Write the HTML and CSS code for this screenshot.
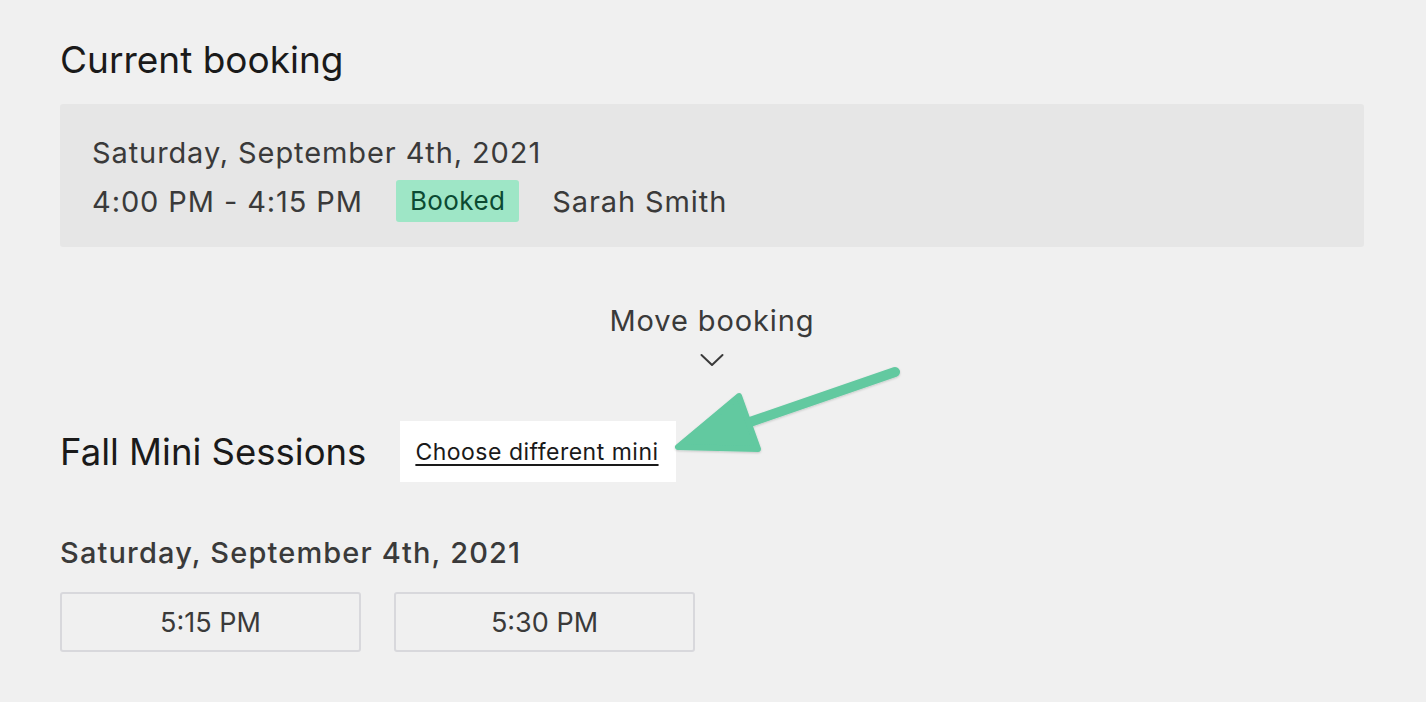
FILE: index.html
```html
<!DOCTYPE html>
<html>
<head>
<meta charset="utf-8">
<link rel="stylesheet" href="styles.css">
</head>
<body>
<div class="page">
  <h1 class="title">Current booking</h1>
  <div class="card">
    <div class="card-date">Saturday, September 4th, 2021</div>
    <div class="card-row">
      <span class="time">4:00 PM - 4:15 PM</span>
      <span class="badge">Booked</span>
      <span class="name">Sarah Smith</span>
    </div>
  </div>
  <div class="move">
    <div class="move-label">Move booking</div>
    <svg class="chevron" width="24" height="14" viewBox="0 0 24 14"><path d="M1.5 2 L12 12 L22.5 2" fill="none" stroke="#3a3a3a" stroke-width="2" stroke-linecap="round" stroke-linejoin="round"/></svg>
  </div>
  <div class="session-row">
    <h2 class="session-title">Fall Mini Sessions</h2>
    <div class="choose-box"><a class="choose" href="#">Choose different mini</a></div>
    <svg class="arrow" width="260" height="110" viewBox="0 0 260 110">
      <defs>
        <filter id="sh" x="-10%" y="-10%" width="120%" height="130%">
          <feDropShadow dx="0" dy="1" stdDeviation="1" flood-color="#000" flood-opacity="0.18"/>
        </filter>
      </defs>
      <g filter="url(#sh)">
        <line x1="235" y1="12" x2="90" y2="62" stroke="#62c9a0" stroke-width="10" stroke-linecap="round"/>
        <path d="M79 36 L18 87 L98 89 Z" fill="#62c9a0" stroke="#62c9a0" stroke-width="6" stroke-linejoin="round"/>
      </g>
    </svg>
  </div>
  <h3 class="day">Saturday, September 4th, 2021</h3>
  <div class="slots">
    <button class="slot">5:15 PM</button>
    <button class="slot">5:30 PM</button>
  </div>
</div>
</body>
</html>
```
FILE: styles.css
```css
html, body {
  margin: 0;
  padding: 0;
  background: #f0f0f0;
  font-family: Inter, "Noto Sans", sans-serif;
  color: #3a3a3a;
}
.page {
  padding: 38px 62px 0 60px;
}
.title {
  margin: 0;
  font-size: 37px;
  font-weight: 400;
  color: #1a1a1a;
  line-height: 44px;
}
.card {
  box-sizing: border-box;
  margin-top: 22px;
  background: #e6e6e6;
  border-radius: 3px;
  padding: 32px 32px 0;
  height: 143px;
}
.card-date {
  font-size: 29px;
  letter-spacing: 0.9px;
  line-height: 34px;
}
.card-row {
  display: flex;
  align-items: center;
  margin-top: 10px;
  height: 42px;
  font-size: 29px;
  letter-spacing: 0.9px;
}
.badge {
  background: #9ee6c6;
  color: #0b4a32;
  font-size: 26px;
  letter-spacing: 0.4px;
  border-radius: 3px;
  padding: 0 14px;
  height: 42px;
  line-height: 42px;
  margin-left: 33px;
  margin-right: 33px;
}
.move {
  display: flex;
  flex-direction: column;
  align-items: center;
  margin-top: 57px;
}
.move-label {
  font-size: 29px;
  letter-spacing: 0.9px;
  line-height: 34px;
}
.chevron {
  display: block;
  margin-top: 15px;
}
.session-row {
  position: relative;
  display: flex;
  align-items: center;
  margin-top: 54px;
  height: 61px;
}
.session-title {
  margin: 0;
  font-size: 36.5px;
  font-weight: 400;
  color: #1a1a1a;
}
.choose-box {
  margin-left: 34px;
  background: #ffffff;
  padding: 0 17px 0 15px;
  height: 61px;
  display: flex;
  align-items: center;
}
.choose {
  color: #1a1a1a;
  font-size: 23px;
  letter-spacing: 0.5px;
  text-decoration: underline;
  text-decoration-thickness: 1.5px;
  text-underline-offset: 4px;
}
.arrow {
  position: absolute;
  left: 600px;
  top: -61px;
}
.day {
  margin: 54px 0 0;
  font-size: 29px;
  font-weight: 500;
  letter-spacing: 1.15px;
  line-height: 34px;
}
.slots {
  display: flex;
  gap: 33px;
  margin-top: 22px;
}
.slot {
  width: 301px;
  height: 60px;
  background: transparent;
  border: 2px solid #d8d8dc;
  border-radius: 3px;
  font-family: Inter, "Noto Sans", sans-serif;
  font-size: 27px;
  color: #3a3a3a;
}
```
